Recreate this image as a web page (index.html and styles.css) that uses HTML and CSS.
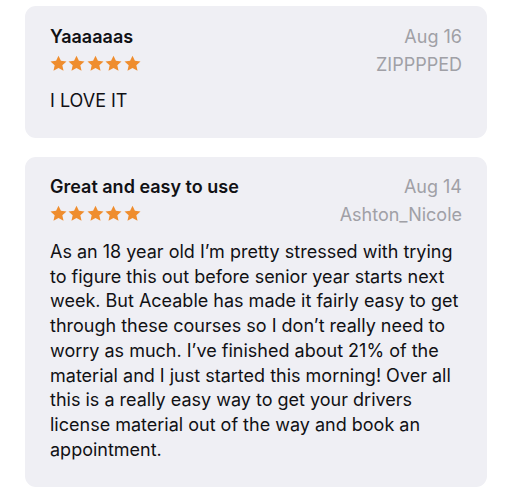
FILE: index.html
```html
<!DOCTYPE html>
<html lang="en">
<head>
<meta charset="utf-8">
<title>Reviews</title>
<link rel="stylesheet" href="styles.css">
</head>
<body>
<svg width="0" height="0" class="defs" aria-hidden="true">
  <defs>
    <symbol id="star" viewBox="0 0 24 24">
      <path d="M12 1l3.4 7.2 7.9.9-5.9 5.4 1.7 7.8L12 18.3l-7.1 4 1.7-7.8L.7 9.1l7.9-.9z"/>
    </symbol>
  </defs>
</svg>
<main class="reviews">
  <article class="review">
    <header class="review-head">
      <div class="review-main">
        <h2 class="review-title">Yaaaaaas</h2>
        <div class="stars" aria-label="5 stars">
          <svg class="star"><use href="#star"/></svg>
          <svg class="star"><use href="#star"/></svg>
          <svg class="star"><use href="#star"/></svg>
          <svg class="star"><use href="#star"/></svg>
          <svg class="star"><use href="#star"/></svg>
        </div>
      </div>
      <div class="review-meta">
        <div class="review-date">Aug 16</div>
        <div class="review-author">ZIPPPPED</div>
      </div>
    </header>
    <p class="review-body">I LOVE IT</p>
  </article>
  <article class="review">
    <header class="review-head">
      <div class="review-main">
        <h2 class="review-title">Great and easy to use</h2>
        <div class="stars" aria-label="5 stars">
          <svg class="star"><use href="#star"/></svg>
          <svg class="star"><use href="#star"/></svg>
          <svg class="star"><use href="#star"/></svg>
          <svg class="star"><use href="#star"/></svg>
          <svg class="star"><use href="#star"/></svg>
        </div>
      </div>
      <div class="review-meta">
        <div class="review-date">Aug 14</div>
        <div class="review-author">Ashton_Nicole</div>
      </div>
    </header>
    <p class="review-body">As an 18 year old I’m pretty stressed with trying to figure this out before senior year starts next week. But Aceable has made it fairly easy to get through these courses so I don’t really need to worry as much. I’ve finished about 21% of the material and I just started this morning! Over all this is a really easy way to get your drivers license material out of the way and book an appointment.</p>
  </article>
</main>
</body>
</html>
```

FILE: styles.css
```css
* {
  box-sizing: border-box;
}

html, body {
  margin: 0;
  background: #ffffff;
}

body {
  font-family: Inter, "Noto Sans", "Liberation Sans", sans-serif;
  color: #111114;
}

.defs {
  position: absolute;
  width: 0;
  height: 0;
  overflow: hidden;
}

.reviews {
  display: flex;
  flex-direction: column;
  gap: 19px;
  padding: 6px 25px;
}

.review {
  background: #efeff4;
  border-radius: 11px;
  padding: 18.5px 25px 24px;
}

.review-head {
  display: flex;
  justify-content: space-between;
  align-items: flex-start;
}

.review-main,
.review-meta {
  display: flex;
  flex-direction: column;
}

.review-meta {
  align-items: flex-end;
}

.review-title {
  margin: 0;
  font-size: 18px;
  font-weight: 600;
  line-height: 24px;
}

.stars {
  display: flex;
  gap: 1.4px;
  height: 32px;
  padding-top: 6px;
}

.star {
  width: 17px;
  height: 17px;
  fill: #ef8d2e;
}

.review-date,
.review-author {
  font-size: 18px;
  color: #a0a0a6;
}

.review-date {
  line-height: 24px;
}

.review-author {
  line-height: 32px;
}

.review-body {
  margin: 8.5px 0 0;
  font-size: 18px;
  line-height: 24.75px;
}
```
